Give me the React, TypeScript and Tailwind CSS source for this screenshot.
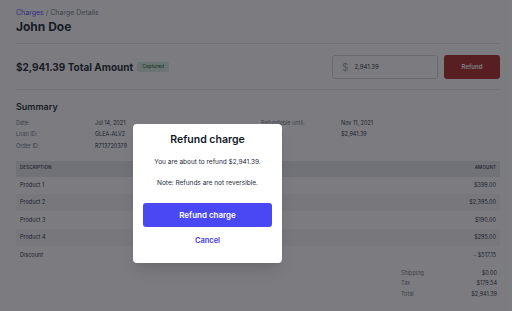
import { FC } from "react";

type Item = { name: string; amount: string };

const items: Item[] = [
	{ name: "Product 1", amount: "$399.00" },
	{ name: "Product 2", amount: "$2,395.00" },
	{ name: "Product 3", amount: "$190.00" },
	{ name: "Product 4", amount: "$295.00" },
	{ name: "Discount", amount: "- $517.15" },
];

const totals: Item[] = [
	{ name: "Shipping", amount: "$0.00" },
	{ name: "Tax", amount: "$179.54" },
	{ name: "Total", amount: "$2,941.39" },
];

const RefundModal: FC = () => (
	<div className="absolute left-[133px] top-[124px] w-[149px] h-[139px] bg-white rounded-[4px] shadow-lg flex flex-col items-center pt-[8px] px-[10px]">
		<div className="text-[10.5px] font-semibold text-gray-900 leading-[16px]">Refund charge</div>
		<div className="mt-[10px] text-[6.5px] text-gray-800 leading-[9px]">You are about to refund $2,941.39.</div>
		<div className="mt-[12px] text-[6.5px] text-gray-800 leading-[9px]">Note: Refunds are not reversible.</div>
		<button className="mt-[15px] w-full h-[24px] rounded-[3px] bg-[#4a48f3] text-white text-[8px] font-semibold">
			Refund charge
		</button>
		<button className="mt-[9px] text-[7.5px] font-semibold text-[#4338f0] leading-[10px]">Cancel</button>
	</div>
);

export default function App() {
	return (
		<div className="relative w-[512px] h-[311px] overflow-hidden bg-white font-['Inter',sans-serif] text-gray-900">
			<div className="pl-4 pr-3 pt-[8px]">
				<div className="text-[7px] leading-[9px] text-gray-500">
					<span className="text-indigo-600">Charges</span> / Charge Details
				</div>
				<h1 className="mt-[2px] text-[12px] font-bold leading-[16px]">John Doe</h1>
				<div className="mt-[8px] border-t border-gray-200" />

				<div className="flex items-center h-[45px]">
					<div className="text-[10px] font-bold leading-[14px]">$2,941.39 Total Amount</div>
					<span className="ml-[4px] flex items-center h-[10px] px-[5px] rounded-[2px] bg-[#d6ebdd] text-green-900 text-[5px]">
						Captured
					</span>
					<div className="ml-auto flex items-center w-[106px] h-[24px] border border-gray-300 rounded-[3px] px-[9px]">
						<span className="text-[10px] text-gray-400 leading-none">$</span>
						<span className="ml-[6px] text-[6px] text-gray-800">2,941.39</span>
					</div>
					<button className="ml-[6px] w-[56px] h-[24px] rounded-[3px] bg-[#a8221f] text-white text-[6px] font-semibold">
						Refund
					</button>
				</div>
				<div className="border-t border-gray-200" />

				<h2 className="mt-[11px] text-[9px] font-semibold leading-[12px]">Summary</h2>
				<div className="mt-[4px] grid grid-cols-[79px_166px_80px_1fr] auto-rows-[11.5px] items-center text-[5.5px] text-gray-800">
					<span className="text-gray-500">Date:</span>
					<span>Jul 14, 2021</span>
					<span className="text-gray-500">Refundable until:</span>
					<span>Nov 11, 2021</span>
					<span className="text-gray-500">Loan ID:</span>
					<span>GLEA-ALV2</span>
					<span className="text-gray-500">Amount:</span>
					<span>$2,941.39</span>
					<span className="text-gray-500">Order ID:</span>
					<span>R713720378</span>
				</div>

				<div className="mt-[9px]">
					<div className="flex items-center justify-between h-[16px] bg-gray-200 px-[4px] text-[4.5px] font-semibold tracking-wide text-gray-700">
						<span>DESCRIPTION</span>
						<span>AMOUNT</span>
					</div>
					{items.map((item, i) => (
						<div
							key={item.name}
							className={`flex items-center justify-between h-[17.4px] px-[4px] text-[5.5px] text-gray-800 ${i % 2 === 1 ? "bg-gray-100" : ""}`}
						>
							<span>{item.name}</span>
							<span>{item.amount}</span>
						</div>
					))}
				</div>

				<div className="mt-[4px] ml-auto w-[99px] pr-[3px] text-[5.5px]">
					{totals.map((t) => (
						<div key={t.name} className="flex items-center justify-between h-[10.5px]">
							<span className="text-gray-500">{t.name}</span>
							<span className="text-gray-800">{t.amount}</span>
						</div>
					))}
				</div>
			</div>

			<div className="absolute inset-0 bg-[#1d1e25]/[0.58]" />
			<RefundModal />
		</div>
	);
}
